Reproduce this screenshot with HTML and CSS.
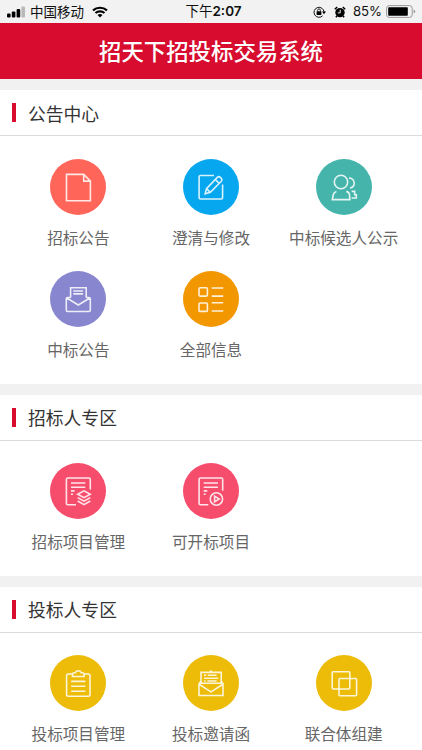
FILE: index.html
```html
<!DOCTYPE html>
<html lang="zh-CN">
<head>
  <meta charset="UTF-8">
  <meta name="viewport" content="width=device-width, initial-scale=1">
  <title>招天下招投标交易系统</title>
  <link rel="stylesheet" href="styles.css">
</head>
<body>

<div class="status">
  <div class="status-left">
    <svg class="signal" width="19" height="12" viewBox="0 0 19 12">
      <rect x="0" y="7.5" width="3.6" height="4" rx="1"/>
      <rect x="4.8" y="5.5" width="3.6" height="6" rx="1"/>
      <rect x="9.6" y="3" width="3.6" height="8.5" rx="1"/>
      <rect x="14.4" y="0.5" width="3.6" height="11" rx="1" fill="#b9b9b9"/>
    </svg>
    <span class="carrier">中国移动</span>
    <svg class="wifi" width="16" height="12" viewBox="0 0 16 12">
      <path d="M1 4.4a10.4 10.4 0 0 1 14 0M3.5 7.1a6.6 6.6 0 0 1 9 0" fill="none" stroke="#000" stroke-width="2.1"/>
      <path d="M8 11.6L5.5 9.1a3.7 3.7 0 0 1 5 0z"/>
    </svg>
  </div>
  <div class="status-time"><span>下午</span>2:07</div>
  <div class="status-right">
    <svg class="lock" width="13" height="12" viewBox="0 0 13 12">
      <path d="M9.6 9.8A5 5 0 1 1 11 6" fill="none" stroke="#111" stroke-width="1"/>
      <path d="M9 5.6h4L11 8.2z"/>
      <rect x="3.6" y="5.3" width="4.8" height="3.6" rx=".4"/>
      <path d="M4.6 5.5V4.3a1.4 1.4 0 0 1 2.8 0v1.2" fill="none" stroke="#111" stroke-width=".9"/>
    </svg>
    <svg class="alarm" width="12" height="12" viewBox="0 0 12 12">
      <circle cx="6" cy="6.6" r="4.7"/>
      <path d="M.8 3.2L3.2 1M11.2 3.2L8.8 1M2.9 10l-1 1.3M9.1 10l1 1.3" stroke="#000" stroke-width="1.5"/>
      <path d="M6.2 3.8v3.1H3.8" fill="none" stroke="#f2f2f2" stroke-width="1"/>
    </svg>
    <span class="percent">85%</span>
    <svg class="battery" width="30" height="13" viewBox="0 0 30 13">
      <rect x=".6" y=".6" width="25.6" height="11.8" rx="2.6" fill="none" stroke="#999" stroke-width="1"/>
      <rect x="2.2" y="2.2" width="19.6" height="8.6" rx=".8"/>
      <path d="M27.6 4.5q1.6.6 1.6 2t-1.6 2z" fill="#999"/>
    </svg>
  </div>
</div>

<header>
  <h1>招天下招投标交易系统</h1>
</header>

<section>
  <h2>公告中心</h2>
  <div class="menu">
    <a class="item">
      <svg class="icon red" viewBox="0 0 56 56">
        <path d="M16.5 15.4h17.2l6.7 6.7v19.6H16.5zM33.7 15.4v6.7h6.7"/>
      </svg>
      <span>招标公告</span>
    </a>
    <a class="item">
      <svg class="icon blue" viewBox="0 0 56 56">
        <path d="M31 16.5H17.5q-1.4 0-1.4 1.4v20.7q0 1.4 1.4 1.4h20.7q1.4 0 1.4-1.4V25.5"/>
        <path d="M22.2 34.8l1.3-5.2 10.8-11.2q1.5-1.5 3 0l1 1q1.3 1.4 0 2.8L27.4 33.3zM32.3 20.5l3.9 3.9M23.5 29.6l3.9 3.7"/>
      </svg>
      <span>澄清与修改</span>
    </a>
    <a class="item">
      <svg class="icon teal" viewBox="0 0 56 56">
        <circle cx="25" cy="23" r="6.7"/>
        <path d="M20.4 32.4q-2.6.8-3.2 3.6l-.9 4.6h17.6l-.4-5q-.4-2.5-3.2-3.2"/>
        <path d="M33 19.2q2.2-.3 3.8 1.3 1.6 1.7 1.4 4.3-.4 3.3-4.2 4.2M35.6 32.4h3.1v3.4h1.6V39h-4.7"/>
      </svg>
      <span>中标候选人公示</span>
    </a>
    <a class="item">
      <svg class="icon purple" viewBox="0 0 56 56">
        <path d="M20.6 26.5v-9.8h15.6v9.8M23.3 20h9.8M23.3 22.9h9.8"/>
        <path d="M20.6 26.5h-3q-1.3 0-1.3 1.3v11.4q0 1.3 1.3 1.3H39q1.3 0 1.3-1.3V27.8q0-1.3-1.3-1.3h-2.8M16.8 27l11.5 7 11.5-7"/>
      </svg>
      <span>中标公告</span>
    </a>
    <a class="item">
      <svg class="icon orange" viewBox="0 0 56 56">
        <rect x="16" y="16.7" width="8.4" height="8.4" rx="1"/>
        <rect x="16" y="32" width="8.4" height="8.4" rx="1"/>
        <path d="M28.7 17h11.5M28.7 25.1h11.5M28.7 31.8h11.5M28.7 40h11.5"/>
      </svg>
      <span>全部信息</span>
    </a>
  </div>
</section>

<section>
  <h2>招标人专区</h2>
  <div class="menu">
    <a class="item">
      <svg class="icon pink" viewBox="0 0 56 56">
        <path d="M26 41.8h-8.4q-1.2 0-1.2-1.2V16.2q0-1.2 1.2-1.2h21.5q1.2 0 1.2 1.2v10.2"/>
        <path d="M21 20h14.3M21 24.2h14.3M21 27.9h3.6M21 31.2h2"/>
        <path d="M27.7 31.2l6.3-3.4 6.3 3.4-6.3 3.5zM27.7 34.6l6.3 3.6 6.3-3.6M27.7 38l6.3 3.6 6.3-3.6"/>
      </svg>
      <span>招标项目管理</span>
    </a>
    <a class="item">
      <svg class="icon pink" viewBox="0 0 56 56">
        <path d="M25.3 41.8h-8q-1.2 0-1.2-1.2V16.2q0-1.2 1.2-1.2h21.2q1.2 0 1.2 1.2v11.5"/>
        <path d="M20.7 20H35M20.7 24.2H35M20.7 27.9h3.6M20.7 31.2h2"/>
        <circle cx="33.4" cy="36" r="6.2"/>
        <path d="M31.6 33.1v5.8l4.6-2.9z"/>
      </svg>
      <span>可开标项目</span>
    </a>
  </div>
</section>

<section>
  <h2>投标人专区</h2>
  <div class="menu">
    <a class="item">
      <svg class="icon yellow" viewBox="0 0 56 56">
        <path d="M22.3 19h-4q-1.7 0-1.7 1.7v18.8q0 1.7 1.7 1.7h20q1.7 0 1.7-1.7V20.7q0-1.7-1.7-1.7h-4"/>
        <path d="M22.5 21.5v-2q0-1.7 1.7-1.7h1q1-2 3.1-2t3.1 2h1q1.7 0 1.7 1.7v2zM21.2 26.4h14.2M21.2 31.3h14.2M21.2 36.2h14.2"/>
      </svg>
      <span>投标项目管理</span>
    </a>
    <a class="item">
      <svg class="icon yellow" viewBox="0 0 56 56">
        <path d="M18 28.3V17.4h20.2v10.9zM26.6 17.2l1.3-1.1 1.3 1.1M21 20.3h2.3M24.8 20.3h8.8M21 23.2h14.2M21 26h1.7M24.3 26h9.3"/>
        <path d="M18 26.2l-2 2.6v11.7h24V28.8l-1.8-2.6M16 29.3l12 7.6 12-7.6"/>
      </svg>
      <span>投标邀请函</span>
    </a>
    <a class="item">
      <svg class="icon yellow" viewBox="0 0 56 56">
        <rect x="16.2" y="16.8" width="17.6" height="17.2" rx="1"/>
        <rect x="23" y="23.5" width="17.6" height="17.2" rx="1"/>
      </svg>
      <span>联合体组建</span>
    </a>
  </div>
</section>

</body>
</html>
```
FILE: styles.css
```css
* {
  box-sizing: border-box;
}
body {
  margin: 0;
  height: 750px;
  overflow: hidden;
  background: #f1f1f1;
  color: #333;
  font-family: "Noto Sans CJK SC", sans-serif;
}
.status {
  display: grid;
  grid-template-columns: 1fr auto 1fr;
  align-items: center;
  height: 23px;
  padding: 0 6px 0 7px;
  background: #f2f2f2;
  color: #111;
  font-size: 13.5px;
  line-height: 23px;
}
.status-left, .status-right {
  display: flex;
  align-items: center;
}
.status-right {
  justify-content: flex-end;
}
.carrier {
  margin: 0 8px 0 4px;
}
.status-time {
  padding-left: 4px;
  font-family: Inter, "Noto Sans CJK SC", sans-serif;
  font-weight: 600;
}
.status-time span {
  font-weight: 400;
}
.percent {
  margin: 0 4px 0 7px;
  font-family: Inter, sans-serif;
  font-size: 13.2px;
}
.alarm {
  margin-left: 8px;
}
header {
  height: 56px;
  margin-bottom: 11px;
  background: #d70c2e;
  color: white;
  text-align: center;
}
h1 {
  margin: 0;
  font-size: 22.4px;
  font-weight: 500;
  line-height: 54px;
}
section {
  height: 293.5px;
  margin-bottom: 11px;
  background: white;
}
section + section {
  height: 181px;
}
h2 {
  display: flex;
  align-items: center;
  height: 46px;
  margin: 0;
  padding-left: 12px;
  border-bottom: 1px solid #dcdcdc;
  font-size: 17.8px;
  font-weight: 400;
  line-height: 24px;
}
h2::before {
  content: "";
  width: 4px;
  height: 19px;
  margin-right: 12px;
  background: #d70c2e;
}
.menu {
  display: grid;
  grid-template-columns: repeat(3, 1fr);
  row-gap: 22px;
  padding: 22.5px 12px 0;
}
.item {
  display: flex;
  flex-direction: column;
  align-items: center;
  color: #666;
  font-size: 15.6px;
  line-height: 24px;
  white-space: nowrap;
}
.icon {
  width: 56px;
  height: 56px;
  margin-bottom: 10px;
  border-radius: 50%;
  fill: none;
  stroke: rgba(255, 255, 255, 0.85);
  stroke-width: 1.6;
}
.red { background: #ff6659; }
.blue { background: #06a7ee; }
.teal { background: #45b5ab; }
.purple { background: #8886cf; }
.orange { background: #f29700; }
.pink { background: #f74d6d; }
.yellow { background: #ecbc08; }
```
